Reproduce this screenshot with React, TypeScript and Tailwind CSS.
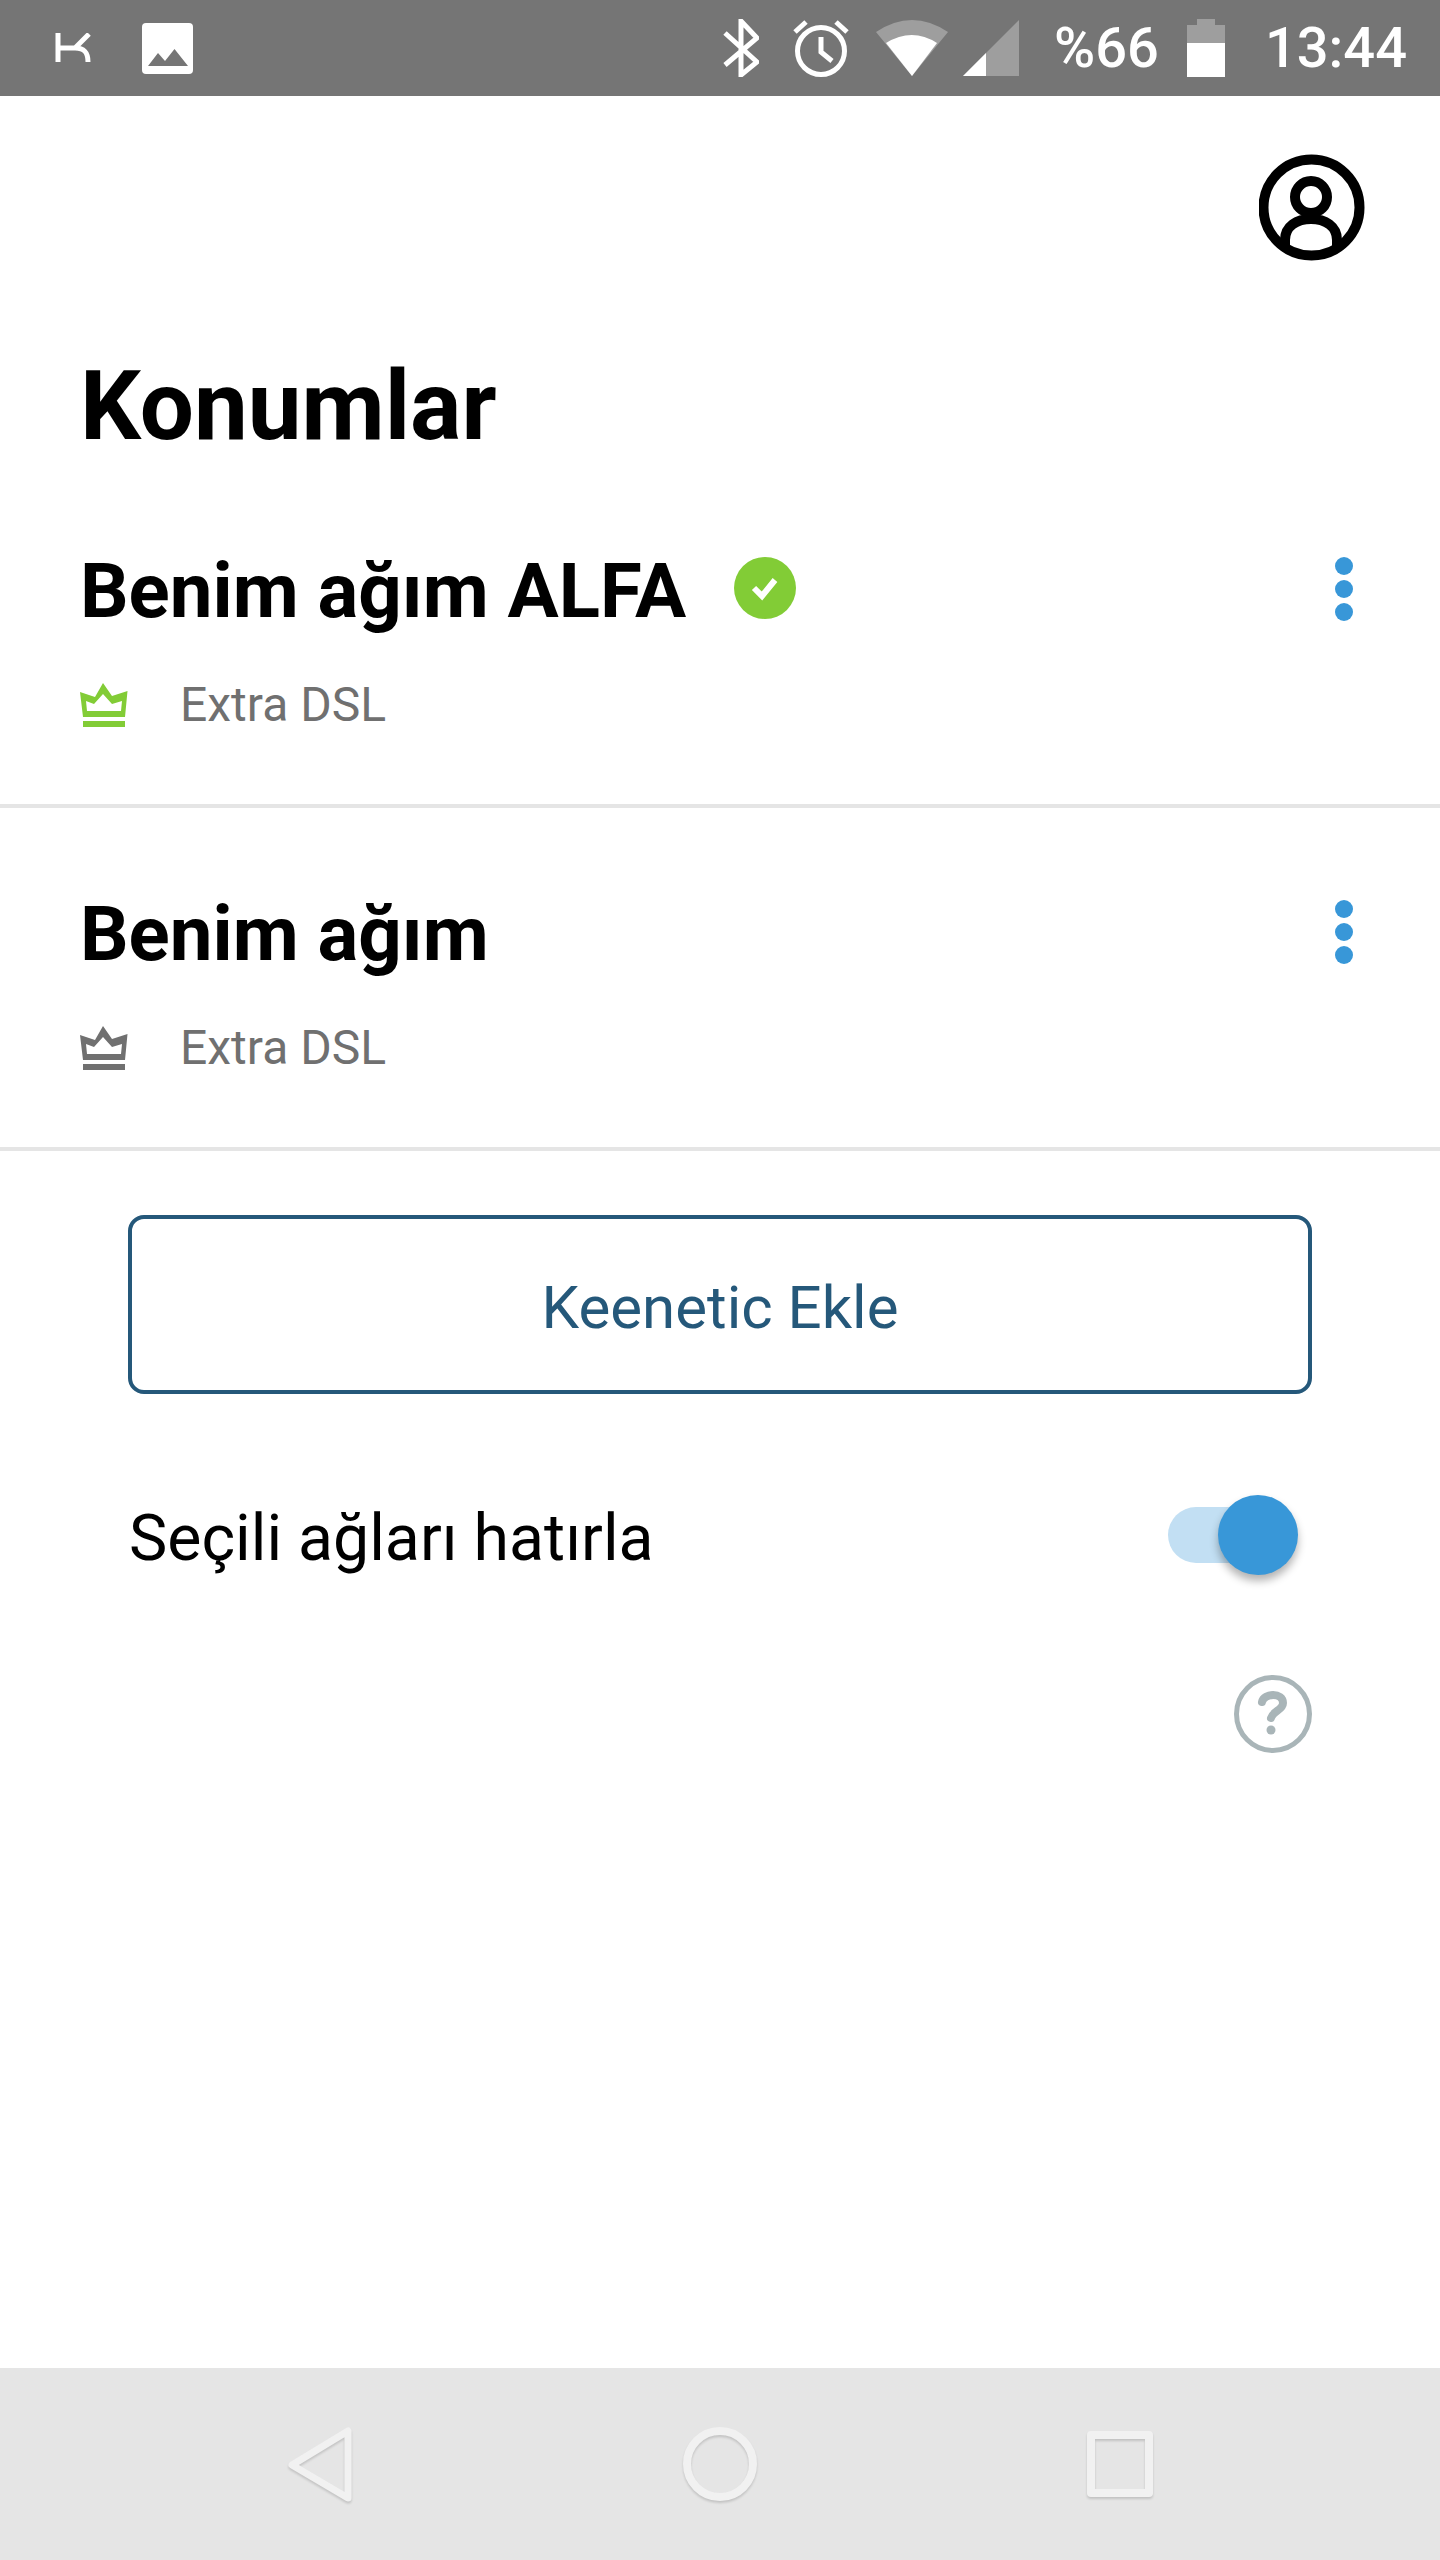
import React from "react";

const Crown = ({ color }: { color: string }) => (
  <svg width="48" height="44" viewBox="0 0 48 44" fill={color}>
    <path
      fillRule="evenodd"
      d="M0 9L15 14L23 0L32 13L47.5 8L45 34H3ZM7 28H41L42 18L32 21L23 11L14 21L6 18Z"
    />
    <rect x="3" y="38" width="42" height="6" />
  </svg>
);

const Dots = () => (
  <div className="flex flex-col gap-[5px]">
    <div className="w-[18px] h-[18px] rounded-full bg-[#3897d8]" />
    <div className="w-[18px] h-[18px] rounded-full bg-[#3897d8]" />
    <div className="w-[18px] h-[18px] rounded-full bg-[#3897d8]" />
  </div>
);

const NetworkRow = ({
  name,
  crownColor,
  online,
}: {
  name: string;
  crownColor: string;
  online?: boolean;
}) => (
  <div className="h-[343px] border-b-[4px] border-[#e5e5e5] pl-[80px] pr-[87px] pt-[70px]">
    <div className="flex items-center justify-between h-[112px]">
      <div className="flex items-center">
        <span className="text-[76.2px] leading-[112px] font-bold text-black">{name}</span>
        {online && (
          <svg className="ml-[48px] -mt-[6px]" width="62" height="62" viewBox="0 0 62 62">
            <circle cx="31" cy="31" r="31" fill="#82cc36" />
            <path d="M20 31L28 39L41 23" fill="none" stroke="#fff" strokeWidth="6" />
          </svg>
        )}
      </div>
      <div className="-mt-[5px]">
        <Dots />
      </div>
    </div>
    <div className="flex items-center mt-[30px]">
      <Crown color={crownColor} />
      <span className="ml-[52px] text-[48px] leading-[56px] text-[#707070]">Extra DSL</span>
    </div>
  </div>
);

export default function App() {
  return (
    <div className="w-[1440px] h-[2560px] flex flex-col bg-white font-['Roboto',sans-serif]">
      {/* status bar */}
      <div className="h-24 bg-[#757575] flex items-center justify-between shrink-0">
        <div className="flex items-center pl-[55px]">
          <svg width="36" height="30" viewBox="0 0 36 30" fill="none" stroke="#fff" strokeWidth="5">
            <path d="M3 0V29M3 15H20L34 1M20 15C30 15 33 20 33 29" />
          </svg>
          <svg className="ml-[51px]" width="51" height="51" viewBox="0 0 51 51">
            <rect width="51" height="51" rx="4" fill="#fff" />
            <path d="M6 43L16 30L23 38L32.500 26L46 43Z" fill="#757575" />
          </svg>
        </div>
        <div className="flex items-center pr-[33px] text-white text-[56px] leading-none font-medium">
          <svg width="36" height="58" viewBox="0 0 36 58" fill="none" stroke="#fff" strokeWidth="5">
            <path d="M2 14L34 43L18 56V2L34 19L2 46" />
          </svg>
          <svg className="ml-[33px]" width="58" height="58" viewBox="0 0 58 58" fill="none" stroke="#fff" strokeWidth="5">
            <circle cx="29" cy="32" r="23.500" />
            <path d="M29 18V33L40 42M3 13L14 3M44 3L55 13" />
          </svg>
          <svg className="ml-[26px]" width="72" height="56" viewBox="0 0 72 56">
            <path d="M0 12Q36 -12 72 12L36 56Z" fill="#9e9e9e" />
            <path d="M10 23Q36 7 61 23L36 56Z" fill="#fff" />
          </svg>
          <svg className="ml-[15px]" width="56" height="56" viewBox="0 0 56 56">
            <path d="M0 56L56 0V56Z" fill="#9e9e9e" />
            <path d="M0 56L23 33V56Z" fill="#fff" />
          </svg>
          <span className="ml-[35px]">%66</span>
          <div className="ml-[28px] flex flex-col items-center w-[38px]">
            <div className="w-[18px] h-[6px] bg-[#9e9e9e]" />
            <div className="w-[38px] h-[18px] bg-[#9e9e9e]" />
            <div className="w-[38px] h-[34px] bg-white" />
          </div>
          <span className="ml-[40px]">13:44</span>
        </div>
      </div>

      {/* content */}
      <div className="flex-1 flex flex-col">
        <div className="flex justify-end pt-[58px] pr-[75px]">
          <svg width="106" height="107" viewBox="0 0 106 107" fill="none" stroke="#000" strokeWidth="10">
            <circle cx="52.500" cy="53.500" r="48" />
            <circle cx="52" cy="43" r="16" />
            <path d="M26 92V86C26 72 38 65 52 65C66 65 78 72 78 86V92" />
          </svg>
        </div>
        <h1 className="pl-[80px] mt-[86px] text-[96px] leading-[118px] font-bold text-black">Konumlar</h1>
        <div>
          <NetworkRow name="Benim ağım ALFA" crownColor="#82cc36" online />
          <NetworkRow name="Benim ağım" crownColor="#707070" />
        </div>

        <div className="mx-[128px] mt-[64px] h-[179px] pt-[6px] border-[4px] border-[#25587a] rounded-[16px] flex items-center justify-center text-[60px] text-[#25587a]">
          Keenetic Ekle
        </div>

        <div className="flex items-center justify-between pl-[129px] pr-[142px] mt-[97px]">
          <span className="pt-[7px] text-[64.4px] leading-[80px] text-black">Seçili ağları hatırla</span>
          <div className="relative w-[130px] h-[80px] flex items-center">
            <div className="w-[102px] h-[56px] rounded-full bg-[#c2dff3]" />
            <div className="absolute right-0 top-0 w-[80px] h-[80px] rounded-full bg-[#3897d8] shadow-[0_6px_8px_rgba(0,0,0,0.3)]" />
          </div>
        </div>

        <div className="flex justify-end pr-[128px] mt-[96px]">
          <svg width="78" height="80" viewBox="0 0 78 80" fill="none" stroke="#a9b5b8">
            <circle cx="39" cy="40" r="36.500" strokeWidth="5" />
            <path d="M28 28C30 19 49 18 49 29C49 36 39 37 37 44" strokeWidth="8" strokeLinecap="round" />
            <circle cx="37" cy="56" r="4.500" fill="#a9b5b8" stroke="none" />
          </svg>
        </div>
      </div>

      {/* nav bar */}
      <div className="h-[192px] bg-[#e5e5e5] flex items-center shrink-0 pl-[288px]">
        <svg className="drop-shadow-[0_2px_1px_rgba(0,0,0,0.15)]" width="64" height="75" viewBox="0 0 64 75" fill="none" stroke="#f1f1f1" strokeWidth="7" strokeLinejoin="round">
          <path d="M60 4V71L4 38Z" />
        </svg>
        <svg className="ml-[331px] drop-shadow-[0_2px_1px_rgba(0,0,0,0.15)]" width="74" height="74" viewBox="0 0 74 74" fill="none" stroke="#f1f1f1" strokeWidth="8">
          <circle cx="37" cy="37" r="33" />
        </svg>
        <svg className="ml-[330px] drop-shadow-[0_2px_1px_rgba(0,0,0,0.15)]" width="66" height="66" viewBox="0 0 66 66" fill="none" stroke="#f1f1f1" strokeWidth="8" strokeLinejoin="round">
          <rect x="4" y="4" width="58" height="58" />
        </svg>
      </div>
    </div>
  );
}
